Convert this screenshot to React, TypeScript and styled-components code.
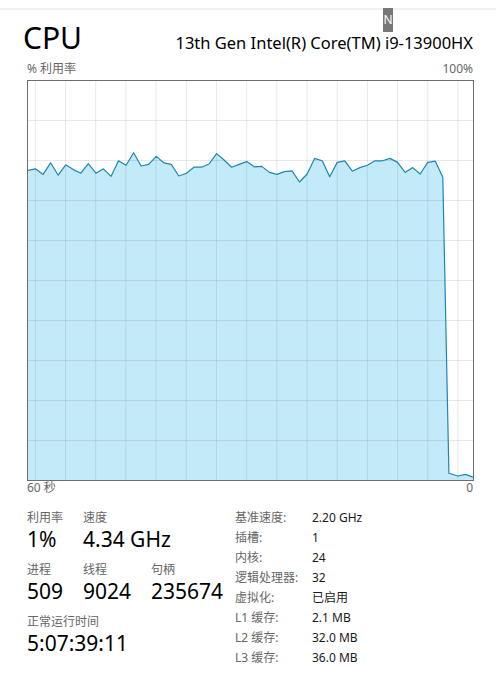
import React from "react";
import styled, { createGlobalStyle } from "styled-components";

// Data
const usage: number[] = [
  77.4, 77.8, 76.4, 79.3, 76.2, 78.8, 77.6, 76.7, 79.1, 76.7, 77.8, 75.9,
  79.8, 78.7, 81.8, 78.5, 78.9, 80.9, 79.3, 78.9, 76.0, 76.7, 78.2, 78.2,
  79.0, 81.6, 80.0, 78.2, 78.9, 79.6, 78.3, 78.4, 76.9, 76.4, 77.1, 77.3,
  74.5, 76.5, 80.4, 79.8, 75.8, 79.4, 79.8, 77.2, 78.1, 78.7, 79.8, 79.8,
  80.4, 79.4, 76.9, 78.1, 76.5, 79.4, 79.7, 75.7, 1.7, 1.0, 1.4, 0.7,
];

const specs: [string, string][] = [
  ["基准速度:", "2.20 GHz"],
  ["插槽:", "1"],
  ["内核:", "24"],
  ["逻辑处理器:", "32"],
  ["虚拟化:", "已启用"],
  ["L1 缓存:", "2.1 MB"],
  ["L2 缓存:", "32.0 MB"],
  ["L3 缓存:", "36.0 MB"],
];

const GRAPH_W = 445;
const GRAPH_H = 399;

const GlobalStyle = createGlobalStyle`
  body {
    margin: 0;
    background: #ffffff;
    font-family: "Noto Sans", "Noto Sans CJK SC", sans-serif;
    color: #000000;
  }
`;

function UsageGraph() {
  const step = GRAPH_W / (usage.length - 1);
  const pts = usage.map((v, i) => {
    // the drop at the end falls almost straight down
    const x = i === 56 ? i * step - 1.5 : i * step;
    return `${x.toFixed(1)},${(GRAPH_H - v * 4).toFixed(1)}`;
  });
  const area = `M0,${GRAPH_H} L${pts.join(" L")} L${GRAPH_W},${GRAPH_H} Z`;
  const line = `M${pts.join(" L")}`;

  const cols = Array.from({ length: 15 }, (_, k) => 7.3 + k * 30.19);
  const rows = Array.from({ length: 9 }, (_, k) => 39 + k * 40);

  return (
    <svg width={GRAPH_W} height={GRAPH_H} viewBox={`0 0 ${GRAPH_W} ${GRAPH_H}`}>
      <path d={area} fill="#c3eaf8" />
      {cols.map((x) => (
        <line key={`c${x}`} x1={x} x2={x} y1={0} y2={GRAPH_H} stroke="rgba(0,0,0,0.09)" strokeWidth={1} />
      ))}
      {rows.map((y) => (
        <line key={`r${y}`} x1={0} x2={GRAPH_W} y1={y + 0.5} y2={y + 0.5} stroke="rgba(0,0,0,0.09)" strokeWidth={1} />
      ))}
      <path d={line} fill="none" stroke="#1f86b2" strokeWidth={1.2} strokeLinejoin="round" />
    </svg>
  );
}

export default function App() {
  return (
    <>
      <GlobalStyle />
      <TopRule />
      <KeyTip>N</KeyTip>
      <Page>
        <Header>
          <Title>CPU</Title>
          <Model>13th Gen Intel(R) Core(TM) i9-13900HX</Model>
        </Header>

        <AxisRow>
          <span>% 利用率</span>
          <span>100%</span>
        </AxisRow>
        <GraphBox>
          <UsageGraph />
        </GraphBox>
        <AxisRow tight>
          <span>60 秒</span>
          <span>0</span>
        </AxisRow>

        <Details>
          <Stats>
            <StatRow>
              <Stat width={56}>
                <StatLabel>利用率</StatLabel>
                <StatValue>1%</StatValue>
              </Stat>
              <Stat>
                <StatLabel>速度</StatLabel>
                <StatValue>4.34 GHz</StatValue>
              </Stat>
            </StatRow>
            <StatRow>
              <Stat width={56}>
                <StatLabel>进程</StatLabel>
                <StatValue>509</StatValue>
              </Stat>
              <Stat width={68}>
                <StatLabel>线程</StatLabel>
                <StatValue>9024</StatValue>
              </Stat>
              <Stat>
                <StatLabel>句柄</StatLabel>
                <StatValue>235674</StatValue>
              </Stat>
            </StatRow>
            <StatRow>
              <Stat>
                <StatLabel>正常运行时间</StatLabel>
                <StatValue>5:07:39:11</StatValue>
              </Stat>
            </StatRow>
          </Stats>

          <SpecTable>
            {specs.map(([k, v]) => (
              <React.Fragment key={k}>
                <SpecKey>{k}</SpecKey>
                <SpecValue>{v}</SpecValue>
              </React.Fragment>
            ))}
          </SpecTable>
        </Details>
      </Page>
    </>
  );
}

const TopRule = styled.div`
  margin-top: 8px;
  height: 2px;
  background: #f0f0f0;
`;

const KeyTip = styled.div`
  position: absolute;
  top: 8px;
  left: 383px;
  width: 10px;
  height: 24px;
  background: #777777;
  color: #ffffff;
  font-size: 12px;
  line-height: 24px;
  text-align: center;
`;

const Page = styled.div`
  padding: 0 23px 0 27px;
`;

const Header = styled.div`
  display: flex;
  justify-content: space-between;
  align-items: baseline;
  margin-top: 13px;
`;

const Title = styled.div`
  margin-left: -4px;
  font-size: 30px;
  line-height: 30px;
`;

const Model = styled.div`
  font-size: 16.5px;
  line-height: 20px;
`;

const AxisRow = styled.div<{ tight?: boolean }>`
  display: flex;
  justify-content: space-between;
  margin: ${(p) => (p.tight ? "0" : "8px 0 3px")};
  font-size: 12px;
  line-height: ${(p) => (p.tight ? "13px" : "16px")};
  color: #666666;
`;

const GraphBox = styled.div`
  width: ${GRAPH_W}px;
  height: ${GRAPH_H}px;
  border: 1px solid #6e6e6e;
  background: #ffffff;

  & svg {
    display: block;
  }
`;

const Details = styled.div`
  display: flex;
  align-items: flex-start;
  margin-top: 16px;
`;

const Stats = styled.div`
  width: 208px;
  display: flex;
  flex-direction: column;
  gap: 10px;
`;

const StatRow = styled.div`
  display: flex;
`;

const Stat = styled.div<{ width?: number }>`
  width: ${(p) => (p.width ? `${p.width}px` : "auto")};
  display: flex;
  flex-direction: column;
`;

const StatLabel = styled.div`
  font-size: 12px;
  line-height: 16px;
  color: #666666;
`;

const StatValue = styled.div`
  font-size: 21px;
  line-height: 26px;
  color: #000000;
  white-space: nowrap;
`;

const SpecTable = styled.div`
  margin-top: -2px;
  display: grid;
  grid-template-columns: 77px auto;
  grid-auto-rows: 20px;
  font-size: 12px;
  line-height: 20px;
`;

const SpecKey = styled.div`
  color: #666666;
  white-space: nowrap;
`;

const SpecValue = styled.div`
  color: #1a1a1a;
`;
